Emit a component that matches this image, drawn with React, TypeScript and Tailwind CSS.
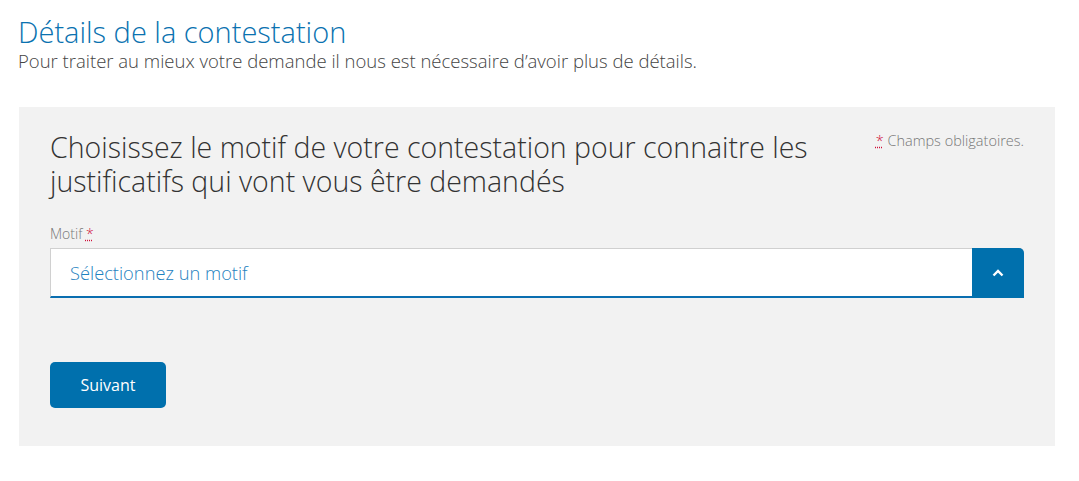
import React from "react";

const App = () => {
  return (
    <div className="w-[1079px] min-h-[481px] bg-white font-['Open_Sans',sans-serif]">
      <div className="px-[18px] pt-[15px]">
        <h1 className="text-[29px] leading-[34px] font-light text-[#0a72b0]">
          Détails de la contestation
        </h1>
        <p className="text-[18.5px] leading-[24px] font-light text-[#444]">
          Pour traiter au mieux votre demande il nous est nécessaire d’avoir plus de détails.
        </p>
      </div>

      <div className="ml-[19px] mt-[34px] w-[1036px] h-[339px] bg-[#f2f2f2] px-[31px] pt-[23px]">
        <div className="flex justify-between">
          <h2 className="w-[800px] text-[28.5px] leading-[34px] font-light text-[#333]">
            Choisissez le motif de votre contestation pour connaitre les justificatifs qui vont vous être demandés
          </h2>
          <span className="mt-0 text-[14.5px] text-[#777] font-light whitespace-nowrap">
            <span className="text-[#d0103a] underline decoration-dotted">*</span> Champs obligatoires.
          </span>
        </div>

        <div className="mt-[27px]">
          <label className="block text-[14px] leading-[18px] font-light text-[#777]">
            Motif <span className="text-[#d0103a] underline decoration-dotted">*</span>
          </label>
          <div className="mt-[5px] flex h-[50px] border border-[#d0d0d0] border-b-2 border-b-[#0a6eb0] rounded-tr-[5px] bg-white">
            <div className="flex-1 flex items-center pl-[19px] text-[18.3px] font-light text-[#1f82c0]">
              Sélectionnez un motif
            </div>
            <button className="w-[52px] -my-px -mr-px -mb-[2px] bg-[#0070ad] rounded-tr-[5px] flex items-center justify-center">
              <svg width="14" height="10" viewBox="0 0 14 10" fill="none">
                <path d="M2.5 7.5 L7 3 L11.5 7.5" stroke="white" strokeWidth="2.4" />
              </svg>
            </button>
          </div>
        </div>

        <button className="mt-[64px] w-[116px] h-[46px] rounded-[5px] bg-[#0070ad] text-white text-[16px]">
          Suivant
        </button>
      </div>
    </div>
  );
};

export default App;
